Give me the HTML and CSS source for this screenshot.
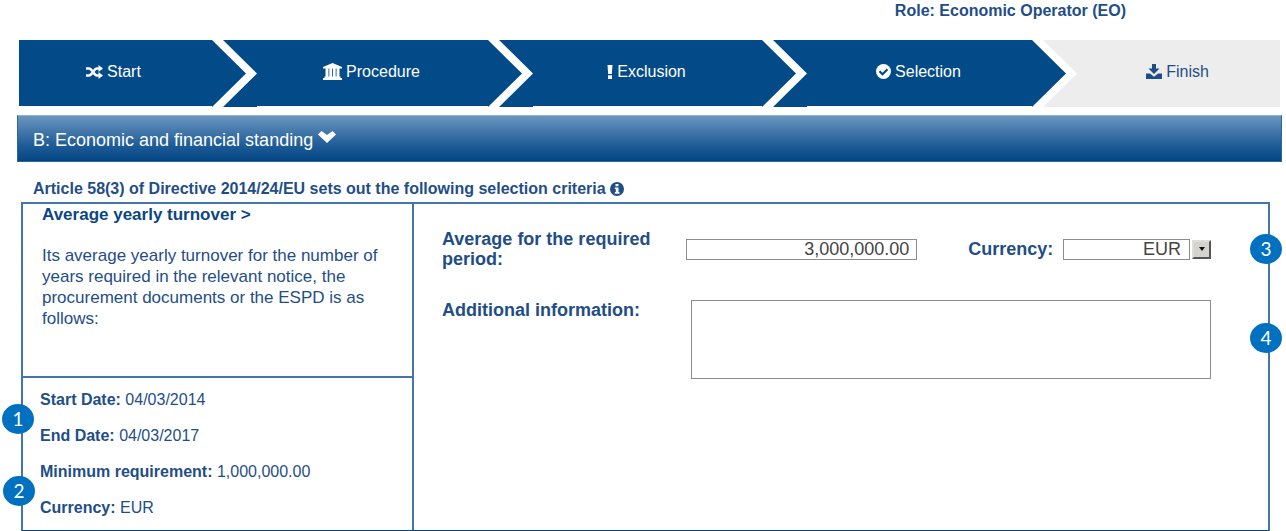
FILE: index.html
```html
<!DOCTYPE html>
<html lang="en">
<head>
<meta charset="utf-8">
<title>ESPD - Selection criteria</title>
<link rel="stylesheet" href="styles.css">
</head>
<body>
<header class="role">Role: Economic Operator (EO)</header>

<nav aria-label="Progress">
  <ol class="steps">
    <li class="step step-first">
      <svg class="icon" width="17" height="14" viewBox="0 0 17 14" aria-hidden="true"><path d="M0 3.500H3C6.500 3.500 7.500 10.500 11 10.500H13M0 10.500H3C6.500 10.500 7.500 3.500 11 3.500H13" fill="none" stroke="currentColor" stroke-width="2.400"/><path d="M12.500 0L17 3.500L12.500 7ZM12.500 7L17 10.500L12.500 14Z" fill="currentColor"/></svg>
      <span>Start</span>
    </li>
    <li class="step">
      <svg class="icon" width="19" height="17" viewBox="0 0 19 17" aria-hidden="true"><path d="M9.500 0L19 4V5.500H0V4Z M1.500 13.500H17.500V15H19V17H0V15H1.500Z M2.500 5H5.500V14H2.500ZM6.300 5H9.100V14H6.300ZM9.900 5H12.700V14H9.900ZM13.500 5H16.500V14H13.500Z" fill="currentColor"/></svg>
      <span>Procedure</span>
    </li>
    <li class="step">
      <svg class="icon" width="6" height="14" viewBox="0 0 6 14" aria-hidden="true"><path d="M0.500 0H5.500L4.800 9H1.200ZM1 10.300H5V14H1Z" fill="currentColor"/></svg>
      <span>Exclusion</span>
    </li>
    <li class="step" aria-current="step">
      <svg class="icon" width="15" height="15" viewBox="0 0 15 15" aria-hidden="true"><circle cx="7.500" cy="7.500" r="7.500" fill="currentColor"/><path d="M3.500 7.200L6.500 10.200L11.500 5.200" fill="none" stroke="#034a88" stroke-width="2.200"/></svg>
      <span>Selection</span>
    </li>
    <li class="step step-last">
      <svg class="icon" width="16" height="15" viewBox="0 0 16 15" aria-hidden="true"><path d="M6 0H10V4.500H13.500L8 10L2.500 4.500H6ZM0 9.500H4L8 12.800L12 9.500H16V15H0Z" fill="currentColor"/></svg>
      <span>Finish</span>
    </li>
  </ol>
</nav>

<main>
  <h1 class="section-bar">
    <button class="section-toggle" type="button" aria-expanded="true">B: Economic and financial standing
      <svg width="18" height="12" viewBox="0 0 18 12" aria-hidden="true"><path d="M0 3.500L3.500 0L9 4L14.500 0L18 3.500L9 12Z" fill="currentColor"/></svg>
    </button>
  </h1>

  <h2 class="article">Article 58(3) of Directive 2014/24/EU sets out the following selection criteria
    <svg width="14" height="14" viewBox="0 0 14 14" aria-hidden="true"><circle cx="7" cy="7" r="7" fill="currentColor"/><path d="M5.500 2H8.500V4.300H5.500ZM4.800 5.500H8.500V10H9.500V11.700H4.800V10H5.800V7H4.800Z" fill="#fff"/></svg>
  </h2>

  <div class="panel">
    <aside class="info">
      <section class="criterion">
        <h3>Average yearly turnover &gt;</h3>
        <p>Its average yearly turnover for the number of years required in the relevant notice, the procurement documents or the ESPD is as follows:</p>
      </section>
      <dl class="facts">
        <div><dt>Start Date:</dt> <dd>04/03/2014</dd></div>
        <div><dt>End Date:</dt> <dd>04/03/2017</dd></div>
        <div><dt>Minimum requirement:</dt> <dd>1,000,000.00</dd></div>
        <div><dt>Currency:</dt> <dd>EUR</dd></div>
      </dl>
    </aside>

    <form class="answers">
      <div class="row row-amount">
        <label class="caption" for="average">Average for the required period:</label>
        <input class="box amount" id="average" type="text" value="3,000,000.00">
        <label class="currency-label" for="currency">Currency:</label>
        <select class="box currency" id="currency"><option>EUR</option></select>
        <button class="drop" type="button" aria-label="Show currencies"><svg width="6" height="4" viewBox="0 0 6 4" aria-hidden="true"><path d="M0 0H6L3 4Z" fill="currentColor"/></svg></button>
      </div>
      <div class="row row-notes">
        <label class="caption" for="notes">Additional information:</label>
        <textarea class="box notes" id="notes"></textarea>
      </div>
    </form>

    <span class="badge badge-1">1</span>
    <span class="badge badge-2">2</span>
    <span class="badge badge-3">3</span>
    <span class="badge badge-4">4</span>
  </div>
</main>
</body>
</html>
```

FILE: styles.css
```css
* {
  box-sizing: border-box;
}

body {
  margin: 0;
  background: #fff;
  color: #1f4e87;
  font: 16px/20px "Liberation Sans", Arial, sans-serif;
}

.role {
  padding: 1px 160px 19px 0;
  font-weight: bold;
  text-align: right;
}

/* Progress arrows */
.steps {
  display: grid;
  grid-template-columns: 227fr 276fr 274fr 270fr 214fr;
  margin: 0 6px 0 19px;
  padding: 0;
  list-style: none;
}

.step {
  display: flex;
  align-items: center;
  justify-content: center;
  gap: 4px;
  height: 67px;
  margin-left: -23px;
  padding-right: 2px;
  padding-bottom: 4px;
  background: #034a88;
  color: #fff;
  clip-path: polygon(0 0, calc(100% - 34px) 0, 100% 50%, calc(100% - 34px) 100%, calc(100% - 34px) calc(100% - 1px), 34px calc(100% - 1px), 34px 100%, 0 100%, 34px 50%);
}

.step-first {
  margin-left: 0;
  padding-right: 38px;
  clip-path: polygon(0 0, calc(100% - 34px) 0, 100% 50%, calc(100% - 34px) 100%, calc(100% - 34px) calc(100% - 1px), 0 calc(100% - 1px));
}

.step-last {
  padding-left: 34px;
  background: #ededed;
  color: #1f4e87;
  clip-path: polygon(0 0, 100% 0, 100% 100%, 0 100%, 34px 50%);
}

.section-bar {
  margin: 8px 4px 0 17px;
  border: 1px solid #2a679f;
  border-top-color: #8fb0cf;
  background: linear-gradient(#6b96bf, #1f5c98 65%, #034683);
}

.section-toggle {
  display: block;
  width: 100%;
  padding: 14px 15px 11px;
  border: 0;
  background: none;
  color: #fff;
  font: 18px/20px "Liberation Sans", Arial, sans-serif;
  text-align: left;
}

.section-toggle svg {
  vertical-align: 3px;
}

.article {
  margin: 17px 0 3px 33px;
  font-size: 16px;
  line-height: 20px;
}

.article svg {
  vertical-align: -2px;
}

/* Criterion panel */
.panel {
  position: relative;
  display: grid;
  grid-template-columns: 391px 1fr;
  margin: 0 16px 0 21px;
  border: 2px solid #4576aa;
  border-bottom-color: #034683;
}

.info {
  border-right: 2px solid #4576aa;
}

.criterion {
  min-height: 174px;
  padding: 1px 24px 0 19px;
  border-bottom: 2px solid #4576aa;
  font-size: 17px;
}

.criterion h3 {
  margin: 0 0 20px;
  color: #0b4684;
  font-size: 17px;
  line-height: 20px;
}

.criterion p {
  margin: 0;
  line-height: 21px;
}

.facts {
  display: grid;
  gap: 16px;
  margin: 0;
  padding: 12px 17px;
}

.facts dt,
.facts dd {
  display: inline;
  margin: 0;
}

.facts dt {
  font-weight: bold;
}

.answers {
  padding: 25px 57px 25px 28px;
}

.row {
  display: flex;
}

.row-amount {
  align-items: center;
}

.row-notes {
  margin-top: 31px;
}

.caption {
  flex: none;
  width: 244px;
  padding-right: 32px;
  font-size: 18px;
  font-weight: bold;
}

.row-notes .caption {
  width: 249px;
}

.box {
  border: 1px solid #8c8c8c;
  border-radius: 0;
  background: #fff;
  color: #444;
  font: 18px/18px "Liberation Sans", Arial, sans-serif;
}

.amount {
  flex: 232 1 232px;
  min-width: 0;
  height: 21px;
  padding: 0 7px;
  text-align: right;
}

.currency-label {
  flex: none;
  width: 95px;
  margin-left: 51px;
  font-size: 18px;
  font-weight: bold;
}

.currency {
  flex: 127 1 127px;
  min-width: 0;
  height: 21px;
  padding: 0 8px;
  appearance: none;
  text-align-last: right;
}

.drop {
  display: grid;
  flex: none;
  place-items: center;
  width: 19px;
  height: 19px;
  margin-left: 2px;
  padding: 0;
  border: 2px solid #ddd;
  border-right-color: #555;
  border-bottom-color: #555;
  background: #d6d3ce;
  color: #111;
}

.notes {
  flex: 1;
  height: 79px;
  resize: none;
}

/* Numbered callouts over the panel edges */
.badge {
  position: absolute;
  display: grid;
  place-items: center;
  width: 32px;
  height: 30px;
  border-radius: 50%;
  background: #0070c0;
  color: #fff;
  font: 19px/20px Lato, sans-serif;
}

.badge-1 {
  top: 200px;
  left: -21px;
}

.badge-2 {
  top: 272px;
  left: -20px;
}

.badge-3 {
  top: 30px;
  right: -14px;
}

.badge-4 {
  top: 119px;
  right: -14px;
}
```
